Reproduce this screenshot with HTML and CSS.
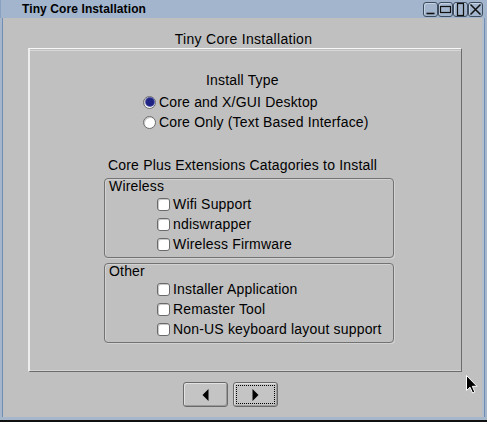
FILE: index.html
```html
<!DOCTYPE html>
<html>
<head>
<meta charset="utf-8">
<link rel="stylesheet" href="styles.css">
</head>
<body>
<div class="window">
  <div class="titlebar">
    <span class="title">Tiny Core Installation</span>
    <div class="wbtns">
      <span class="wbtn"><svg width="13" height="13" viewBox="0 0 13 13"><path d="M2.5 10.5h8" stroke="#111" stroke-width="1.6" fill="none"/></svg></span>
      <span class="wbtn"><svg width="13" height="13" viewBox="0 0 13 13"><rect x="1.5" y="3.5" width="10" height="6" stroke="#111" stroke-width="1.2" fill="none"/></svg></span>
      <span class="wbtn"><svg width="13" height="13" viewBox="0 0 13 13"><rect x="3.5" y="0.5" width="6" height="12" stroke="#111" stroke-width="1.2" fill="none"/></svg></span>
      <span class="wbtn"><svg width="13" height="13" viewBox="0 0 13 13"><path d="M1.5 1.5L11.5 11.5M11.5 1.5L1.5 11.5" stroke="#111" stroke-width="1.5" fill="none"/></svg></span>
    </div>
  </div>
  <div class="client">
    <div class="heading">Tiny Core Installation</div>
    <div class="panel">
      <div class="install-type">Install Type</div>
      <div class="radios">
        <div class="row radio-row"><span class="radio checked"></span><span>Core and X/GUI Desktop</span></div>
        <div class="row radio-row"><span class="radio"></span><span>Core Only (Text Based Interface)</span></div>
      </div>
      <div class="ext-title">Core Plus Extensions Catagories to Install</div>
      <div class="group">
        <div class="group-label">Wireless</div>
        <div class="row check-row"><span class="check"></span><span>Wifi Support</span></div>
        <div class="row check-row"><span class="check"></span><span>ndiswrapper</span></div>
        <div class="row check-row"><span class="check"></span><span>Wireless Firmware</span></div>
      </div>
      <div class="group group-other">
        <div class="group-label">Other</div>
        <div class="row check-row"><span class="check"></span><span>Installer Application</span></div>
        <div class="row check-row"><span class="check"></span><span>Remaster Tool</span></div>
        <div class="row check-row"><span class="check"></span><span>Non-US keyboard layout support</span></div>
      </div>
    </div>
    <div class="nav">
      <div class="btn"><svg width="7" height="12" viewBox="0 0 7 12"><path d="M6.5 0L0.5 6L6.5 12Z" fill="#000"/></svg></div>
      <div class="btn focused"><svg width="7" height="12" viewBox="0 0 7 12"><path d="M0.5 0L6.5 6L0.5 12Z" fill="#000"/></svg></div>
    </div>
  </div>
  <svg class="cursor" width="12" height="19" viewBox="0 0 12 19"><path d="M0.5 0.5L0.5 15.5L4 12.2L6.6 18L8.8 17L6.3 11.3L11 11.3Z" fill="#000" stroke="#fff" stroke-width="1"/></svg>
</div>
</body>
</html>
```

FILE: styles.css
```css
* { box-sizing: border-box; }
html, body { margin: 0; padding: 0; background: #c0c0c0; }
.window {
  position: relative;
  width: 487px;
  height: 422px;
  background: #a6b7cc;
  border-bottom: 2px solid #111;
  display: flex;
  flex-direction: column;
  overflow: hidden;
  font-family: "Liberation Sans", Arial, Helvetica, sans-serif;
  color: #000;
}
.titlebar {
  height: 18px;
  flex: none;
  display: flex;
  align-items: flex-start;
  background: #a2b5cd;
  border-left: 1px solid #8aa2c2;
}
.title {
  font-size: 12px;
  font-weight: bold;
  line-height: 18px;
  padding-left: 21px;
  letter-spacing: 0.1px;
}
.wbtns {
  margin-left: auto;
  margin-right: 4px;
  margin-top: 2px;
  display: flex;
}
.wbtn {
  width: 15px;
  height: 15px;
  border: 1px solid #3e4c60;
  border-radius: 3px;
  background: #a2b5cd;
  box-shadow: inset 1px 1px 0 #c4d2e2;
  display: flex;
  align-items: center;
  justify-content: center;
}
.client {
  flex: 1;
  margin: 0 5px 3px 3px;
  background: #c0c0c0;
  display: flex;
  flex-direction: column;
  align-items: flex-start;
  font-size: 14px;
  letter-spacing: 0.18px;
  box-shadow: -1px 0 0 #6f8db6, 2px 0 0 #b4bfcc, 3px 0 0 #6f8db6;
}
.heading {
  align-self: stretch;
  text-align: center;
  line-height: 16px;
  margin-top: 13px;
  margin-bottom: 1px;
  padding-left: 2px;
  letter-spacing: 0.3px;
}
.panel {
  margin-left: 25px;
  width: 434px;
  height: 324px;
  border-top: 1px solid #f8f8f8;
  border-left: 2px solid #ededed;
  border-right: 1px solid #6c6c6c;
  border-bottom: 1px solid #6c6c6c;
  box-shadow: inset 0 1px 0 #c0c0c0, inset 0 2px 0 #d6d6d6, inset 0 -1px 0 #d4d4d4;
  padding-top: 23px;
  display: flex;
  flex-direction: column;
  align-items: flex-start;
}
.install-type {
  line-height: 16px;
  margin-left: 176px;
}
.radios {
  margin-top: 4px;
  margin-left: 113px;
}
.row {
  height: 20px;
  display: flex;
  align-items: center;
  line-height: 16px;
}
.radio {
  width: 13px;
  height: 13px;
  border-radius: 50%;
  border: 1px solid #6a6a6a;
  background: #fff;
  box-shadow: inset 1px 1px 0 #c8c8c8;
  margin-right: 3px;
  display: flex;
  align-items: center;
  justify-content: center;
}
.radio.checked::after {
  content: "";
  width: 8px;
  height: 8px;
  border-radius: 50%;
  background: #1f2384;
  box-shadow: 0 0 0 1px #5a5ea8;
}
.ext-title {
  line-height: 16px;
  margin-top: 25px;
  margin-left: 78px;
}
.group {
  margin-top: 5px;
  margin-left: 74px;
  width: 290px;
  height: 80px;
  border: 1px solid #727272;
  border-radius: 4px;
  box-shadow: inset 1px 1px 0 #d2d2d2, 1px 1px 0 #d2d2d2;
}
.group-other { margin-top: 5px; }
.group-label {
  line-height: 15px;
  height: 15px;
  padding-left: 4px;
}
.check-row {
  padding-left: 52px;
}
.check {
  width: 13px;
  height: 13px;
  border: 1px solid #6a6a6a;
  border-radius: 3px;
  background: #fff;
  box-shadow: inset 1px 1px 0 #c8c8c8;
  margin-right: 3px;
  flex: none;
}
.nav {
  margin-top: 10px;
  margin-left: 180px;
  display: flex;
  gap: 5px;
}
.btn {
  width: 45px;
  height: 25px;
  border: 1px solid #6a6a6a;
  border-radius: 3px;
  background: #c4c4c4;
  box-shadow: inset 1px 1px 0 #e2e2e2, inset -1px -1px 0 #9a9a9a;
  display: flex;
  align-items: center;
  justify-content: center;
  position: relative;
}
.btn.focused::after {
  content: "";
  position: absolute;
  left: 2px;
  top: 2px;
  right: 2px;
  bottom: 2px;
  border: 1px dotted #000;
}
.cursor {
  position: absolute;
  left: 466px;
  top: 375px;
}
```
